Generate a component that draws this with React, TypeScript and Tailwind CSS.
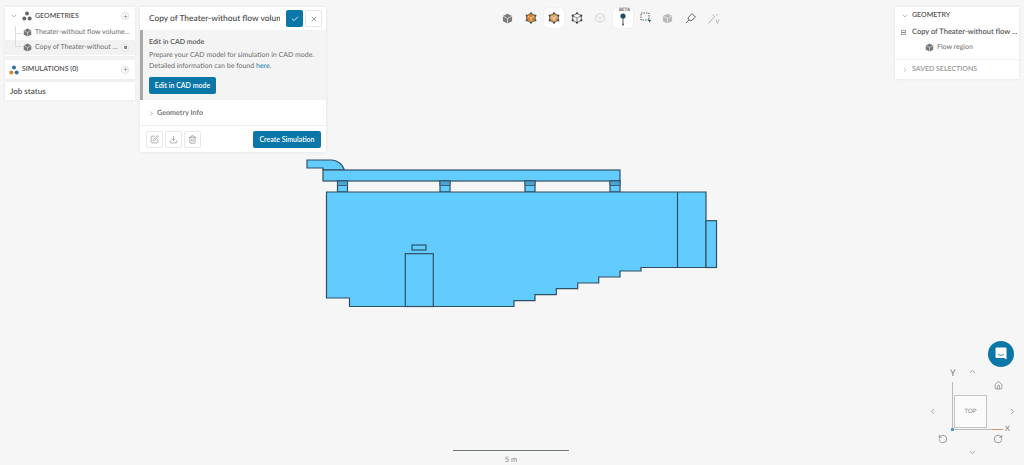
import { Check, ChevronDown, ChevronLeft, ChevronRight, ChevronUp, Download, Home, Plus, RotateCcw, RotateCw, SquarePen, Trash2, X } from "lucide-react"

function Cube({ color = "#6b6b6b", size = 9 }: { color?: string; size?: number }) {
  return (
    <svg width={size} height={size} viewBox="0 0 12 12" className="shrink-0">
      <path d="M6 .8 11 3.3v5.6L6 11.4 1 8.9V3.3z" fill={color} />
      <path d="M1 3.3 6 6l5-2.700M6 6v5.400" stroke="#f6f6f6" strokeWidth="0.7" fill="none" />
    </svg>
  )
}

function Nodes({ a = "#666", b = "#666" }: { a?: string; b?: string }) {
  return (
    <svg width="10" height="10" viewBox="0 0 12 12" className="shrink-0">
      <circle cx="6" cy="3" r="2.400" fill={a} />
      <circle cx="2.800" cy="9" r="2.400" fill={b} />
      <circle cx="9.200" cy="9" r="2.400" fill={a} />
    </svg>
  )
}

function ToolCube({ fill, dots, faint }: { fill?: string; dots: string; faint?: boolean }) {
  return (
    <svg width="12" height="12" viewBox="0 0 14 14" opacity={faint ? 0.35 : 1}>
      <path d="M7 1.500 12 4.300v5.400L7 12.500 2 9.700V4.300z" fill={fill ?? "none"} stroke={dots} strokeWidth="0.9" />
      <path d="M2 4.300 7 7l5-2.700M7 7v5.500" stroke={fill ? "#f6f6f6" : dots} strokeWidth="0.7" fill="none" />
      {!faint &&
        [[7, 1.500], [12, 4.300], [12, 9.700], [7, 12.500], [2, 9.700], [2, 4.300]].map(([x, y]) => (
          <circle key={`${x}-${y}`} cx={x} cy={y} r="1.300" fill={dots} />
        ))}
    </svg>
  )
}

function Toolbar() {
  return (
    <div className="flex flex-1 items-center pl-[165px] pt-[1px]">
      <div className="flex h-5 w-[23px] items-center justify-center">
        <Cube color="#7c7c7c" size={11} />
      </div>
      <div className="flex h-5 w-[23px] items-center justify-center">
        <ToolCube fill="#d9822b" dots="#555" />
      </div>
      <div className="mx-[1.500px] flex h-5 w-[20px] items-center justify-center rounded-sm bg-white shadow-[0_0_1px_#ccc]">
        <ToolCube dots="#444" fill="#e0a060" />
      </div>
      <div className="flex h-5 w-[23px] items-center justify-center">
        <ToolCube dots="#444" />
      </div>
      <div className="flex h-5 w-[23px] items-center justify-center">
        <ToolCube dots="#888" faint />
      </div>
      <div className="relative mx-[2px] flex h-5 w-[20px] items-center justify-center rounded-sm bg-white shadow-[0_0_1px_#ccc]">
        <span className="absolute -top-[1px] left-[6px] text-[4.500px] font-bold leading-[6px] text-[#555]">BETA</span>
        <svg width="8" height="14" viewBox="0 0 8 14" className="mt-[2px]">
          <circle cx="4" cy="4" r="2.600" fill="#1f4e6b" />
          <path d="M4 6v6" stroke="#333" strokeWidth="0.8" />
          <circle cx="4" cy="12.500" r="1" fill="#555" />
        </svg>
      </div>
      <div className="flex h-5 w-[21px] items-center justify-center">
        <svg width="12" height="12" viewBox="0 0 12 12">
          <rect x="1" y="1" width="8" height="7" fill="none" stroke="#555" strokeWidth="0.9" strokeDasharray="1.500 1" />
          <path d="M8 7l3.500 1.700-1.500.6-.6 1.500z" fill="#1f4e6b" />
        </svg>
      </div>
      <div className="flex h-5 w-[23px] items-center justify-center">
        <Cube color="#b9b9b9" size={11} />
      </div>
      <div className="flex h-5 w-[23px] items-center justify-center">
        <svg width="12" height="12" viewBox="0 0 12 12" fill="none" stroke="#666" strokeWidth="1">
          <path d="M1 11 4 8M4 8l-1-2 4-4.500 3.500 3.500L6 9z" />
        </svg>
      </div>
      <div className="flex h-5 w-[23px] items-center justify-center">
        <svg width="13" height="13" viewBox="0 0 13 13" fill="none" stroke="#b5b5b5" strokeWidth="1">
          <path d="M1.500 11.500 8 4M6 2.500l.5 1.500M10 2l-.5 1.500M9 7.500l1.500 4M12 7.500l-1.500 4" />
        </svg>
      </div>
    </div>
  )
}

function LeftColumn() {
  return (
    <div className="flex w-[130px] shrink-0 flex-col text-[#555]">
      <div className="relative h-[49px] bg-white shadow-[0_0_3px_rgba(0,0,0,0.08)]">
        <div className="flex h-[18px] items-center pl-[5px] pr-[6px]">
          <ChevronDown size={8} strokeWidth={1.500} className="text-[#777]" />
          <span className="ml-[4px]"><Nodes /></span>
          <span className="ml-[3px] text-[7px] font-semibold">GEOMETRIES</span>
          <span className="ml-auto flex h-[8px] w-[8px] items-center justify-center rounded-full border border-[#ddd]">
            <Plus size={5} strokeWidth={2} />
          </span>
        </div>
        <div className="flex h-[15px] items-center pl-[18px] pr-[4px]">
          <Cube color="#777" />
          <span className="ml-[3px] whitespace-nowrap text-[7px] text-[#6d6d6d]">Theater-without flow volume...</span>
        </div>
        <div className="flex h-[15px] items-center bg-[#f2f2f2] pl-[18px] pr-[6px]">
          <Cube color="#777" />
          <span className="ml-[3px] whitespace-nowrap text-[7px] text-[#6d6d6d]">Copy of Theater-without ...</span>
          <span className="ml-auto flex h-[8px] w-[8px] items-center justify-center rounded-full border border-[#ddd] bg-white">
            <span className="h-[3px] w-[3px] bg-[#888]" />
          </span>
        </div>
        {/* tree guide lines */}
        <div className="absolute left-[10px] top-[19px] h-[21px] w-[7px] border-b border-l border-[#ddd]" />
        <div className="absolute left-[10px] top-[26px] h-px w-[7px] bg-[#ddd]" />
      </div>
      <div className="mt-[4px] flex h-[19px] items-center bg-white pl-[4px] pr-[6px] shadow-[0_0_3px_rgba(0,0,0,0.08)]">
        <Nodes a="#2f6fa8" b="#d9822b" />
        <span className="ml-[3px] text-[7px] font-semibold">SIMULATIONS (0)</span>
        <span className="ml-auto flex h-[8px] w-[8px] items-center justify-center rounded-full border border-[#ddd]">
          <Plus size={5} strokeWidth={2} />
        </span>
      </div>
      <div className="mt-[3px] flex h-[18px] items-center bg-white pl-[5px] text-[8px] font-semibold shadow-[0_0_3px_rgba(0,0,0,0.08)]">
        Job status
      </div>
    </div>
  )
}

function IconButton({ children }: { children: React.ReactNode }) {
  return (
    <button className="flex h-[17px] w-[17px] items-center justify-center rounded-[2px] border border-[#e8e8e8] bg-white text-[#999]">
      {children}
    </button>
  )
}

function GeometryPanel() {
  return (
    <div className="w-[186px] shrink-0 bg-white text-[#555] shadow-[0_0_3px_rgba(0,0,0,0.1)]">
      <div className="flex h-[23px] items-center pl-[9px] pr-[4px]">
        <span className="w-[131px] overflow-hidden whitespace-nowrap text-[8.400px] font-semibold">Copy of Theater-without flow volume</span>
        <button className="ml-[6px] flex h-[17px] w-[17px] items-center justify-center rounded-[2px] bg-[#0b76a8] text-white">
          <Check size={8} strokeWidth={2.500} />
        </button>
        <button className="ml-[2px] flex h-[17px] w-[17px] items-center justify-center rounded-[2px] border border-[#e8e8e8] text-[#666]">
          <X size={8} strokeWidth={2} />
        </button>
      </div>
      <div className="h-[70px] border-l-[3px] border-[#a9a9a9] bg-[#f4f4f4] pl-[6px] pt-[7px]">
        <div className="text-[7px] font-semibold leading-[11px]">Edit in CAD mode</div>
        <div className="mt-[2px] whitespace-nowrap text-[7px] leading-[10.500px] text-[#6d6d6d]">
          Prepare your CAD model for simulation in CAD mode.
          <br />
          Detailed information can be found <span className="text-[#1a7fb0]">here</span>.
        </div>
        <button className="mt-[6px] h-[17px] w-[67px] whitespace-nowrap rounded-[2px] bg-[#0b76a8] text-[7px] font-semibold text-white">
          Edit in CAD mode
        </button>
      </div>
      <div className="flex h-[26px] items-center border-b border-[#eee] pl-[8px] pt-[2px] text-[7.200px] font-semibold text-[#666]">
        <ChevronRight size={7} strokeWidth={1.500} />
        <span className="ml-[2px]">Geometry Info</span>
      </div>
      <div className="flex h-[26px] items-center gap-[2px] pl-[6px] pr-[5px]">
        <IconButton><SquarePen size={9} /></IconButton>
        <IconButton><Download size={9} /></IconButton>
        <IconButton><Trash2 size={9} /></IconButton>
        <button className="ml-auto h-[17px] w-[68px] whitespace-nowrap rounded-[2px] bg-[#0b76a8] text-[7px] font-semibold text-white">
          Create Simulation
        </button>
      </div>
    </div>
  )
}

function RightPanel() {
  return (
    <div className="w-[124px] shrink-0 bg-white text-[#555] shadow-[0_0_3px_rgba(0,0,0,0.08)]">
      <div className="flex h-[17px] items-center pl-[6px] text-[7px] font-semibold">
        <ChevronDown size={8} strokeWidth={1.500} className="text-[#777]" />
        <span className="ml-[3px]">GEOMETRY</span>
      </div>
      <div className="flex h-[16px] items-center pl-[6px] text-[7.500px] font-semibold">
        <span className="flex h-[5px] w-[5px] items-center justify-center border border-[#aaa]">
          <span className="h-px w-[3px] bg-[#888]" />
        </span>
        <span className="ml-[6px] whitespace-nowrap">Copy of Theater-without flow ...</span>
      </div>
      <div className="flex h-[20px] items-center border-b border-[#f0f0f0] pb-[5px] pl-[30px] text-[7px] text-[#6d6d6d]">
        <Cube color="#777" />
        <span className="ml-[3px]">Flow region</span>
      </div>
      <div className="flex h-[19px] items-center pl-[6px] text-[7px] font-semibold text-[#999]">
        <ChevronRight size={8} strokeWidth={1.500} />
        <span className="ml-[3px]">SAVED SELECTIONS</span>
      </div>
    </div>
  )
}

function Model() {
  const s = "#2f4f63"
  const fill = "#63ccff"
  return (
    <svg width="1024" height="465" className="absolute inset-0" fill={fill} stroke={s} strokeWidth="1.200">
      <path d="M307 160H332Q341 161 344.500 170H323V168H307Z" />
      <rect x="323" y="170" width="297" height="11" />
      {[337.500, 440, 525, 610].map((x) => (
        <g key={x}>
          <rect x={x} y="181" width="10" height="11" />
          <rect x={x} y="181" width="10" height="4.500" fill="#4aa3d0" strokeWidth="0.8" />
        </g>
      ))}
      <path d="M326.500 192H706V267.500H641V271H620V277H598.700V283H577.700V288.700H556.300V294.700H535V300.700H514V306.500H349.500V298H326.500Z" />
      <path d="M677.500 192V267.500" fill="none" />
      <rect x="706" y="220.700" width="10.500" height="46.800" />
      <rect x="405.300" y="253.700" width="28" height="52.800" />
      <rect x="412" y="245" width="14" height="5" />
    </svg>
  )
}

function Gizmo() {
  return (
    <div className="absolute left-[925px] top-[365px] h-[95px] w-[95px] text-[#888]">
      <ChevronUp size={9} className="absolute left-[43px] top-[2px]" />
      <Home size={9} className="absolute left-[69px] top-[16px]" />
      <ChevronLeft size={9} className="absolute left-[3px] top-[42px]" />
      <ChevronRight size={9} className="absolute left-[83px] top-[42px]" />
      <RotateCcw size={10} className="absolute left-[13px] top-[69px]" />
      <RotateCw size={10} className="absolute left-[68px] top-[69px]" />
      <ChevronDown size={9} className="absolute left-[43px] top-[83px]" />
      <span className="absolute left-[25px] top-[2px] text-[9px] leading-[12px] text-[#777]">Y</span>
      <span className="absolute left-[80px] top-[58px] text-[7.500px] leading-[12px] text-[#777]">X</span>
      <div className="absolute left-[27px] top-[17px] h-[47px] w-px bg-[#bbb]" />
      <div className="absolute left-[27px] top-[64px] h-px w-[40px] bg-[#bbb]" />
      <div className="absolute left-[67px] top-[64px] h-px w-[11px] bg-[#c9976a]" />
      <div className="absolute left-[26px] top-[63px] h-[3px] w-[3px] bg-[#4a9fd0]" />
      <div className="absolute left-[29px] top-[30px] flex h-[33px] w-[33px] items-center justify-center border border-[#c4c4c4] bg-[#fafafa] text-[6px] text-[#888]">
        TOP
      </div>
    </div>
  )
}

export default function App() {
  return (
    <div className="relative h-[465px] w-[1024px] overflow-hidden bg-[#f6f6f6] font-['Lato','Open_Sans',sans-serif] [text-rendering:geometricPrecision]">
      <Model />
      <div className="relative flex items-start gap-[5px] px-[5px] pt-[7px]">
        <LeftColumn />
        <GeometryPanel />
        <Toolbar />
        <RightPanel />
      </div>

      {/* scale bar */}
      <div className="absolute left-[453px] top-[450px] w-[116px] border-t border-[#6f7b78] pt-[1px] text-center text-[7.500px] leading-[16px] text-[#888]">
        5 m
      </div>

      {/* chat bubble */}
      <div className="absolute left-[987.500px] top-[340.500px] flex h-[26px] w-[26px] items-center justify-center rounded-full bg-[#0b76a8]">
        <svg width="12" height="13" viewBox="0 0 12 13">
          <path d="M1.500 0.500h9a1 1 0 0 1 1 1v11l-2.500-1.500H1.500a1 1 0 0 1-1-1v-8.500a1 1 0 0 1 1-1z" fill="#fff" />
          <path d="M3 7.500q3 1.800 6 0" stroke="#0b76a8" strokeWidth="0.8" fill="none" />
        </svg>
      </div>

      <Gizmo />
    </div>
  )
}
